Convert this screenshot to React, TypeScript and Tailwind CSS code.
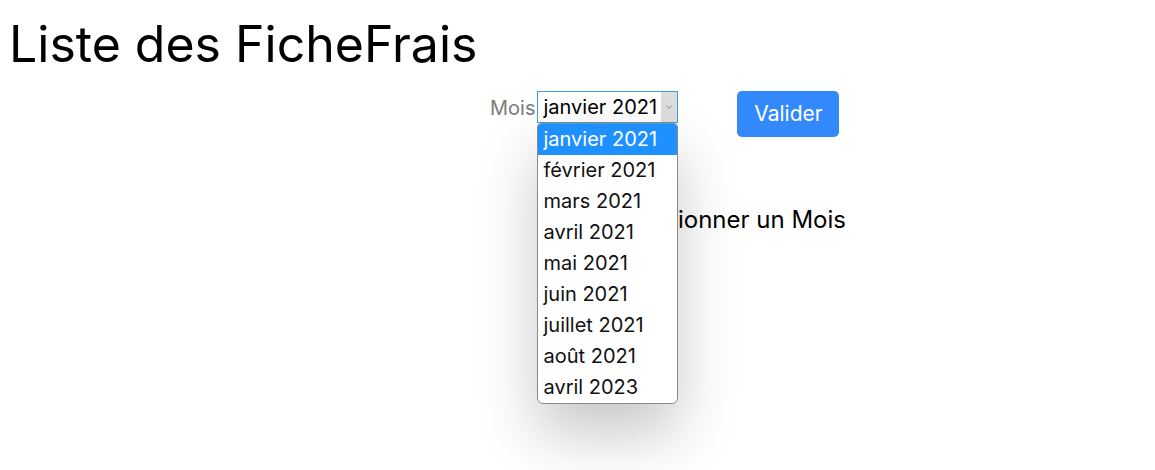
import { ChevronDown } from "lucide-react";

const months = [
  "janvier 2021",
  "février 2021",
  "mars 2021",
  "avril 2021",
  "mai 2021",
  "juin 2021",
  "juillet 2021",
  "août 2021",
  "avril 2023",
];

export default function App() {
  return (
    <main className="h-[470px] overflow-hidden bg-white font-['Inter',sans-serif] text-black">
      <h1 className="pl-[9px] pt-[14px] text-[50px] leading-[60px] font-normal">
        Liste des FicheFrais
      </h1>

      <div className="ml-[490px] mt-[17px] flex items-start">
        <label className="mt-[5px] text-[20px] leading-[24px] text-[#7b7b7b]">
          Mois
        </label>
        <div className="relative ml-[2px]">
          <div className="flex h-[32px] w-[141px] items-center border border-[#3ba0dc] bg-white">
            <span className="flex-1 pl-[5px] text-[20px] leading-[24px]">
              janvier 2021
            </span>
            <span className="flex h-full w-[16px] items-center justify-center bg-[#dddddd]">
              <ChevronDown size={10} strokeWidth={2} className="text-[#777777]" />
            </span>
          </div>
          <ul className="absolute left-0 top-[32px] z-10 w-[141px] overflow-hidden rounded-b-[6px] rounded-t-[4px] border border-[#8a8a8a] bg-white shadow-[0_30px_60px_rgba(0,0,0,0.22)]">
            {months.map((month, i) => (
              <li
                key={month}
                className={
                  i === 0
                    ? "h-[31px] bg-[#1e90ff] pl-[5px] text-[20px] leading-[31px] text-white"
                    : "h-[31px] pl-[5px] text-[20px] leading-[31px] text-[#111111]"
                }
              >
                {month}
              </li>
            ))}
          </ul>
        </div>
        <button className="ml-[59px] h-[46px] w-[102px] rounded-[5px] bg-[#3389fc] text-[21px] text-white">
          Valider
        </button>
      </div>

      <div className="mt-[68px] flex justify-end pr-[309px]">
        <p className="text-[24px] leading-[30px]">Sélectionner un Mois</p>
      </div>
    </main>
  );
}
